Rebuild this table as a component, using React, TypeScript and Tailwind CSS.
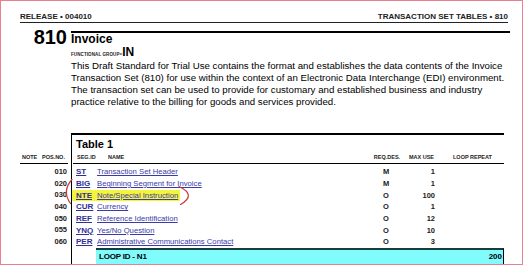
import React from "react";

type Row = [string, string, string, string, string];

const rows: Row[] = [
  ["010", "ST", "Transaction Set Header", "M", "1"],
  ["020", "BIG", "Beginning Segment for Invoice", "M", "1"],
  ["030", "NTE", "Note/Special Instruction", "O", "100"],
  ["040", "CUR", "Currency", "O", "1"],
  ["050", "REF", "Reference Identification", "O", "12"],
  ["055", "YNQ", "Yes/No Question", "O", "10"],
  ["060", "PER", "Administrative Communications Contact", "O", "3"],
];

function TRow({
  left,
  children,
  rightClass = "",
}: {
  left?: React.ReactNode;
  children?: React.ReactNode;
  rightClass?: string;
}) {
  return (
    <div className="flex">
      <div className="w-[51px] shrink-0">{left}</div>
      <div className={"flex-1 border-l border-black " + rightClass}>{children}</div>
    </div>
  );
}

export default function App() {
  return (
    <div className="relative w-[523px] h-[265px] overflow-hidden bg-white border border-[#e8808f] font-['Liberation_Sans',Arial,sans-serif] text-black">
      {/* running header */}
      <div className="ml-[19px] mr-[14px] mt-[11px] flex justify-between border-b border-[#222] pb-[1px] text-[8px] font-bold leading-[9px] text-[#222]">
        <span>RELEASE • 004010</span>
        <span>TRANSACTION SET TABLES • 810</span>
      </div>

      {/* title block */}
      <div className="ml-[19px] mr-[12px] flex">
        <div className="w-[51px] shrink-0 pr-[4px] pt-[4px] text-right text-[20px] font-bold leading-[20px]">
          810
        </div>
        <div className="flex-1 mt-[8px] border-t-2 border-black">
          <div className="text-[12px] font-bold leading-[12px]">Invoice</div>
          <div className="flex h-[15px] items-baseline whitespace-nowrap leading-[15px]">
            <span className="text-[4.5px] font-bold tracking-[0.1px] text-[#222]">FUNCTIONAL GROUP=</span>
            <span className="text-[12px] font-bold">IN</span>
          </div>
          <div className="text-[9.7px] leading-[12px] whitespace-nowrap">
            <div>This Draft Standard for Trial Use contains the format and establishes the data contents of the Invoice</div>
            <div>Transaction Set (810) for use within the context of an Electronic Data Interchange (EDI) environment.</div>
            <div>The transaction set can be used to provide for customary and established business and industry</div>
            <div>practice relative to the billing for goods and services provided.</div>
          </div>
        </div>
      </div>

      {/* table */}
      <div className="ml-[19px] mr-[18px] mt-[25px]">
        <TRow rightClass="border-t-2">
          <div className="h-[17px] pl-[4px] pt-[1px] text-[11px] font-bold leading-[16px]">Table 1</div>
        </TRow>
        <div className="flex h-[12px] text-[5.5px] font-bold leading-[11px] text-[#222] whitespace-nowrap">
          <div className="w-[51px] shrink-0">
            <div className="mr-[3px] flex border-b border-black pl-[2px]">
              <span className="w-[20px]">NOTE</span>
              <span>POS.NO.</span>
            </div>
          </div>
          <div className="flex-1 border-l border-black">
            <div className="ml-[1px] flex border-b border-black pl-[4px]">
              <span className="w-[31px]">SEG.ID</span>
              <span className="w-[262px]">NAME</span>
              <span className="w-[34px] text-center">REQ.DES.</span>
              <span className="w-[30px] text-right">MAX USE</span>
              <span className="pl-[19px]">LOOP REPEAT</span>
            </div>
          </div>
        </div>
        <TRow>
          <div className="h-[2px]" />
        </TRow>
        {rows.map(([pos, seg, name, req, max]) => {
          const hi = seg === "NTE";
          return (
            <TRow
              key={pos}
              left={
                <div className="h-[11.67px] pr-[4px] text-right text-[7.5px] font-bold leading-[11.67px] text-[#222]">
                  {pos}
                </div>
              }
            >
              <div className="flex h-[11.67px] items-center text-[7.7px] leading-[11px] whitespace-nowrap">
                <div className={"flex shrink-0 items-center h-[11px] pl-[4px] " + (hi ? "bg-[#f4f43c] pr-[2px]" : "")}>
                  <span className="w-[21px] shrink-0 font-bold text-[8px] text-[#2f2f96] underline">{seg}</span>
                  <span className="shrink-0 text-[#3a3aa8] underline">{name}</span>
                </div>
                <div className="flex-1" />
                <span className="w-[32px] shrink-0 text-center text-[7.5px] font-bold text-[#222]">{req}</span>
                <span className="w-[34px] shrink-0 pr-[1px] text-right text-[7.5px] font-bold text-[#222]">{max}</span>
                <span className="w-[68px] shrink-0" />
              </div>
            </TRow>
          );
        })}
        <TRow rightClass="pl-[24px]">
          <div className="flex h-[22px] justify-between border-t-2 border-r border-[#163c3c] border-r-black bg-[#80fcfc] pl-[3px] pr-[1px] pt-[2px] text-[8px] font-bold leading-[10px]">
            <span className="tracking-[-0.2px]">LOOP ID - N1</span>
            <span>200</span>
          </div>
        </TRow>
        <TRow>
          <div className="h-[20px]" />
        </TRow>
      </div>

      {/* hand-drawn red marks */}
      <svg
        className="pointer-events-none absolute left-[-1px] top-[-1px]"
        width="525"
        height="265"
        viewBox="0 0 525 265"
      >
        <path d="M72 179.5 Q61.5 191 70.5 203.5" fill="none" stroke="#c8383c" strokeWidth="1.2" strokeLinecap="round" />
        <path d="M179 186.5 Q197 195 180.5 204.5" fill="none" stroke="#c8383c" strokeWidth="1.2" strokeLinecap="round" />
      </svg>
    </div>
  );
}
